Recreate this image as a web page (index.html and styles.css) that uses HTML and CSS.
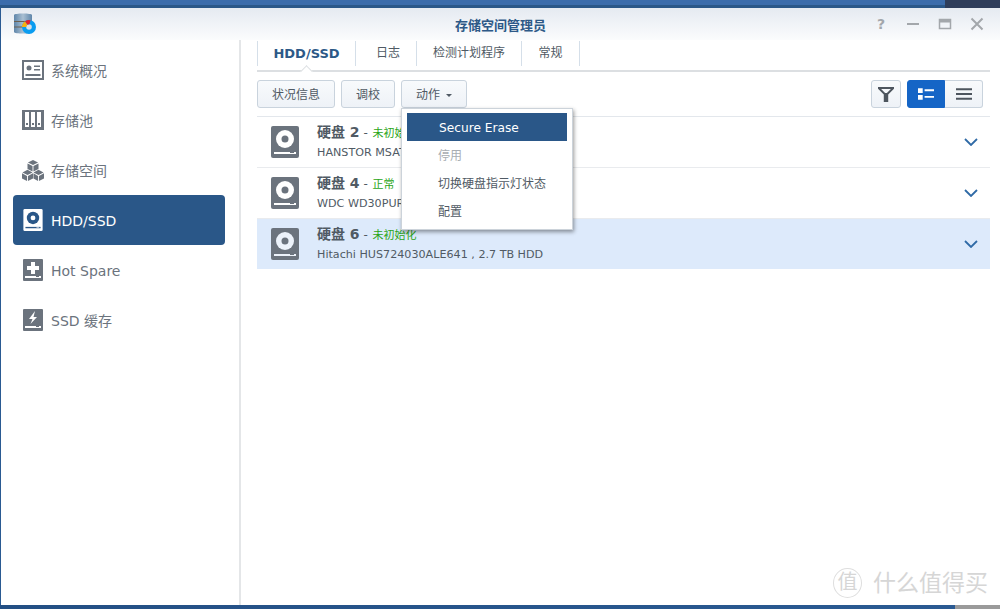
FILE: index.html
```html
<!DOCTYPE html>
<html lang="zh-CN">
<head>
    <meta charset="UTF-8">
    <title>存储空间管理员</title>
    <link rel="stylesheet" href="styles.css">
</head>
<body>
    <svg class="sprites" width="0" height="0">
        <defs>
            <linearGradient id="logo-can" x1="0" x2="1" y1="0" y2="0">
                <stop offset="0" stop-color="#5f86aa"/>
                <stop offset="0.5" stop-color="#a9bfd2"/>
                <stop offset="1" stop-color="#5f86aa"/>
            </linearGradient>
        </defs>
        <symbol id="ico-disk" viewBox="0 0 28 32">
            <rect width="28" height="32" rx="2" fill="currentColor"/>
            <circle cx="14" cy="13" r="9" fill="var(--hole)"/>
            <circle cx="14" cy="13" r="3.5" fill="currentColor"/>
            <path d="M3 26h22v2H3z" fill="var(--hole)"/>
            <path d="M19 26h4v1h-4z" fill="currentColor"/>
        </symbol>
        <symbol id="ico-spare" viewBox="0 0 20 22">
            <rect width="20" height="22" rx="1" fill="currentColor"/>
            <path d="M8 3h4v4h4v4h-4v4H8v-4H4V7h4z" fill="var(--hole)"/>
            <path d="M2 17h16v2H2z" fill="var(--hole)"/>
            <path d="M13 17h3v1h-3z" fill="currentColor"/>
        </symbol>
        <symbol id="ico-ssd" viewBox="0 0 20 22">
            <rect width="20" height="22" rx="1" fill="currentColor"/>
            <path d="M12 2L6 10h3.500L7.500 15 14 8h-3.500z" fill="var(--hole)"/>
            <path d="M2 17h16v2H2z" fill="var(--hole)"/>
            <path d="M13 17h3v1h-3z" fill="currentColor"/>
        </symbol>
    </svg>

    <div class="strip strip-top"></div>
    <div class="window">
        <header class="titlebar">
            <svg class="app-logo" viewBox="0 0 22 22">
                <path d="M0 2C0 0 18 0 18 2V19C18 21 0 21 0 19z" fill="url(#logo-can)"/>
                <path d="M0 8.500h16M0 14h16" stroke="#6b5f50" stroke-width="1"/>
                <circle cx="15" cy="14" r="7" fill="#0a9cf0"/>
                <circle cx="15" cy="14" r="2.800" fill="#d8dfe6"/>
                <path d="M8 14a7 7 0 0 1 3-5.800l2.500 3.600A3 3 0 0 0 12.200 14z" fill="#f8b010"/>
                <path d="M11 8.200a7 7 0 0 1 5.500-1l-1 4a3 3 0 0 0-2 .6z" fill="#e8202c"/>
            </svg>
            <div class="app-title">存储空间管理员</div>
            <div class="win-controls">
                <span class="win-help">?</span>
                <svg viewBox="0 0 14 14"><path d="M1 7h12" stroke="#a3a7ab" stroke-width="2"/></svg>
                <svg viewBox="0 0 14 14"><path d="M1.500 2.500h11v9h-11z" fill="none" stroke="#a3a7ab" stroke-width="1.500"/><path d="M1 3h12v2.500H1z" fill="#a3a7ab"/></svg>
                <svg viewBox="0 0 14 14"><path d="M1.500 1.500l11 11M12.500 1.500l-11 11" stroke="#a3a7ab" stroke-width="2"/></svg>
            </div>
        </header>

        <div class="content">
            <nav class="sidebar">
                <a class="side-item">
                    <svg class="side-ico" viewBox="0 0 22 20">
                        <path d="M0 0h22v20H0z" fill="currentColor"/>
                        <path d="M2 2h18v16H2z" fill="#fff"/>
                        <circle cx="7" cy="8" r="2.500" fill="currentColor"/>
                        <path d="M12 5.500h6v1.500h-6zM12 9h6v1.500h-6zM3.500 14h15v2h-15z" fill="currentColor"/>
                    </svg>
                    <span>系统概况</span>
                </a>
                <a class="side-item">
                    <svg class="side-ico" viewBox="0 0 22 20">
                        <path d="M0 0h22v20H0z" fill="currentColor"/>
                        <path d="M3 2h4v15H3zM9 2h4v15H9zM15 2h4v15h-4z" fill="#fff"/>
                        <path d="M4 13h2v2H4zM10 13h2v2h-2zM16 13h2v2h-2z" fill="currentColor"/>
                    </svg>
                    <span>存储池</span>
                </a>
                <a class="side-item">
                    <svg class="side-ico side-ico-cubes" viewBox="0 0 24 23">
                        <g fill="currentColor">
                            <path d="M12 0l5.500 2.800L12 5.600 6.500 2.800zM6 3.800l5.500 2.800v6L6 9.800zM18 3.800l-5.500 2.800v6L18 9.800z"/>
                            <path d="M6 10.800l5.500 2.800L6 16.400.5 13.600zM0 14.600l5.500 2.800v5.600L0 20.200zM12 14.600l-5.500 2.800v5.600l5.500-2.800z"/>
                            <path d="M18 10.800l5.500 2.800L18 16.400l-5.500-2.800zM12.500 14.600l5 2.800v5.600l-5-2.800zM24 14.600l-5.500 2.800v5.600l5.500-2.800z"/>
                        </g>
                    </svg>
                    <span>存储空间</span>
                </a>
                <a class="side-item is-active">
                    <svg class="side-ico side-ico-drive"><use href="#ico-disk"/></svg>
                    <span class="side-latin">HDD/SSD</span>
                </a>
                <a class="side-item">
                    <svg class="side-ico side-ico-drive"><use href="#ico-spare"/></svg>
                    <span class="side-latin">Hot Spare</span>
                </a>
                <a class="side-item">
                    <svg class="side-ico side-ico-drive"><use href="#ico-ssd"/></svg>
                    <span>SSD 缓存</span>
                </a>
            </nav>

            <main class="main">
                <div class="tabs">
                    <div class="tab is-current">HDD/SSD</div>
                    <div class="tab tab-log">日志</div>
                    <div class="tab tab-plan">检测计划程序</div>
                    <div class="tab tab-general">常规</div>
                </div>

                <div class="toolbar">
                    <button class="btn btn-info">状况信息</button>
                    <button class="btn btn-tune">调校</button>
                    <div class="action-wrap">
                        <button class="btn btn-action">动作<i class="caret"></i></button>
                        <ul class="menu">
                            <li class="menu-item is-hover">Secure Erase</li>
                            <li class="menu-item is-disabled">停用</li>
                            <li class="menu-item">切换硬盘指示灯状态</li>
                            <li class="menu-item">配置</li>
                        </ul>
                    </div>
                    <div class="tool-right">
                        <button class="btn btn-filter">
                            <svg viewBox="0 0 18 18"><path d="M0 1h18v2l-6.500 6.500V18h-5V9.500L0 3zM3.500 3.500L8 8h2l4.500-4.500z" fill="#4d555e" fill-rule="evenodd"/></svg>
                        </button>
                        <div class="view-switch">
                            <button class="view-btn is-on">
                                <svg viewBox="0 0 17 12"><path d="M0 0h5v5H0zM0 7h5v5H0zM7 1h10v2H7zM7 8h10v2H7z" fill="#fff"/></svg>
                            </button>
                            <button class="view-btn">
                                <svg viewBox="0 0 15 11"><path d="M0 0h15v2H0zM0 4.500h15v2H0zM0 9h15v2H0z" fill="#4d555e"/></svg>
                            </button>
                        </div>
                    </div>
                </div>

                <div class="disk-list">
                    <div class="disk-row">
                        <svg class="disk-ico"><use href="#ico-disk"/></svg>
                        <div class="disk-info">
                            <div class="disk-head"><b>硬盘 2</b> - <span class="state">未初始化</span></div>
                            <div class="disk-sub">HANSTOR MSAT</div>
                        </div>
                        <svg class="chevron" viewBox="0 0 14 8"><path d="M1 1l6 6 6-6" fill="none" stroke="#2f6aa6" stroke-width="1.800"/></svg>
                    </div>
                    <div class="disk-row">
                        <svg class="disk-ico"><use href="#ico-disk"/></svg>
                        <div class="disk-info">
                            <div class="disk-head"><b>硬盘 4</b> - <span class="state">正常</span></div>
                            <div class="disk-sub">WDC WD30PUR</div>
                        </div>
                        <svg class="chevron" viewBox="0 0 14 8"><path d="M1 1l6 6 6-6" fill="none" stroke="#2f6aa6" stroke-width="1.800"/></svg>
                    </div>
                    <div class="disk-row is-selected">
                        <svg class="disk-ico"><use href="#ico-disk"/></svg>
                        <div class="disk-info">
                            <div class="disk-head"><b>硬盘 6</b> - <span class="state">未初始化</span></div>
                            <div class="disk-sub">Hitachi HUS724030ALE641 , 2.7 TB HDD</div>
                        </div>
                        <svg class="chevron" viewBox="0 0 14 8"><path d="M1 1l6 6 6-6" fill="none" stroke="#2f6aa6" stroke-width="1.800"/></svg>
                    </div>
                </div>
            </main>
        </div>
    </div>
    <div class="strip strip-bottom"></div>

    <div class="watermark">
        <span class="wm-badge">值</span>
        <span class="wm-text">什么值得买</span>
    </div>
</body>
</html>
```

FILE: styles.css
```css
* {
    margin: 0;
    padding: 0;
    box-sizing: border-box;
}

body {
    width: 1000px;
    height: 609px;
    overflow: hidden;
    position: relative;
    display: flex;
    flex-direction: column;
    background-color: #2a5a92;
    font-family: "DejaVu Sans", "Noto Sans CJK SC", sans-serif;
    color: #505a64;
}

.sprites {
    position: absolute;
}

.strip {
    flex: none;
}

.strip-top {
    height: 8px;
    background:
        linear-gradient(90deg, transparent 945px, #2e3d5a 945px),
        linear-gradient(#3b6cab 0, #3b6cab 5px, #2a5788 5px);
}

.strip-bottom {
    height: 4px;
    background: linear-gradient(90deg, #234f84 0, #2a5a92 955px, #9a9a9a 955px);
}

.window {
    flex: 1;
    min-height: 0;
    margin-left: 1px;
    display: flex;
    flex-direction: column;
    background-color: #fff;
}

/* barre de titre */
.titlebar {
    flex: none;
    height: 32px;
    display: grid;
    grid-template-columns: 1fr auto 1fr;
    align-items: center;
    padding: 0 13px;
    background: linear-gradient(#e5eaf1, #fbfcfd);
}

.app-logo {
    width: 22px;
    height: 22px;
}

.app-title {
    font-size: 13px;
    font-weight: bold;
    color: #2d5987;
}

.win-controls {
    display: flex;
    justify-content: flex-end;
    align-items: center;
    gap: 18px;
    margin-right: 3px;
}

.win-controls svg {
    width: 14px;
    height: 14px;
}

.win-help {
    width: 14px;
    text-align: center;
    font-size: 14px;
    font-weight: bold;
    line-height: 14px;
    color: #a3a7ab;
}

.content {
    flex: 1;
    min-height: 0;
    display: flex;
}

/* colonne de gauche */
.sidebar {
    flex: none;
    width: 240px;
    padding: 5px 14px 0 12px;
    border-right: 2px solid #e4e6e8;
}

.side-item {
    height: 50px;
    display: flex;
    align-items: center;
    gap: 7px;
    padding-left: 9px;
    border-radius: 4px;
    font-size: 14px;
    color: #6b737d;
    --hole: #fff;
}

.side-item.is-active {
    background-color: #2a5788;
    color: #fff;
    --hole: #2a5788;
}

.side-latin {
    padding-top: 2px;
}

.side-ico {
    flex: none;
    width: 22px;
    height: 20px;
}

.side-ico-cubes {
    height: 23px;
}

.side-ico-drive {
    height: 22px;
}

/* zone principale */
.main {
    flex: 1;
    min-width: 0;
    padding: 1px 10px 0 16px;
}

.tabs {
    height: 31px;
    display: flex;
    border-bottom: 2px solid #dcdfe2;
}

.tab {
    height: 25px;
    line-height: 25px;
    text-align: center;
    font-size: 12px;
    border-right: 1px solid #d5dfe9;
    color: #505a64;
}

.tab.is-current {
    width: 99px;
    border-left: 1px solid #d5dfe9;
    font-size: 13px;
    font-weight: bold;
    color: #2d5987;
    position: relative;
}

/* petite encoche sous l'onglet actif */
.tab.is-current::after {
    content: "";
    position: absolute;
    left: 44px;
    top: 26px;
    width: 8px;
    height: 8px;
    background-color: #fff;
    border-left: 1px solid #dcdfe2;
    border-top: 1px solid #dcdfe2;
    transform: rotate(45deg);
}

.tab-log {
    width: 61px;
    padding-left: 4px;
}

.tab-plan {
    width: 105px;
}

.tab-general {
    width: 58px;
}

.toolbar {
    height: 45px;
    padding-top: 8px;
    display: flex;
    gap: 6px;
    border-bottom: 1px solid #e3e7ec;
}

.btn {
    height: 28px;
    padding-bottom: 2px;
    border: 1px solid #c9d3dd;
    border-radius: 3px;
    background: linear-gradient(#f8fafc, #eef2f7);
    font-family: inherit;
    font-size: 12px;
    color: #505a64;
}

.btn-info {
    width: 78px;
}

.btn-tune {
    width: 54px;
}

.action-wrap {
    position: relative;
}

.btn-action {
    width: 66px;
}

.caret {
    display: inline-block;
    margin-left: 6px;
    vertical-align: middle;
    border: 3px solid transparent;
    border-top: 3px solid #505a64;
    border-bottom: 0;
}

.menu {
    position: absolute;
    left: 0;
    top: 28px;
    z-index: 5;
    width: 172px;
    height: 122px;
    padding: 4px 5px;
    list-style: none;
    background-color: #fff;
    border: 1px solid #ccd3da;
    box-shadow: 1px 2px 4px rgba(0, 0, 0, 0.4);
}

.menu-item {
    height: 28px;
    line-height: 28px;
    padding-left: 31px;
    font-size: 12px;
    color: #505a64;
}

.menu-item.is-hover {
    margin-bottom: 1px;
    padding-left: 32px;
    line-height: 30px;
    font-size: 12.2px;
    background-color: #2a5788;
    color: #fff;
}

.menu-item.is-disabled {
    color: #a9aeb3;
}

.tool-right {
    margin-left: auto;
    margin-right: 7px;
    display: flex;
    gap: 6px;
}

.btn-filter {
    width: 30px;
    padding: 0;
    display: flex;
    align-items: center;
    justify-content: center;
}

.btn-filter svg {
    width: 16px;
    height: 16px;
}

.view-switch {
    display: flex;
    height: 28px;
}

.view-btn {
    width: 38px;
    display: flex;
    align-items: center;
    justify-content: center;
    border: 1px solid #c9d3dd;
    border-left: 0;
    border-radius: 0 3px 3px 0;
    background: linear-gradient(#f8fafc, #eef2f7);
}

.view-btn.is-on {
    border: 1px solid #1565c6;
    border-radius: 3px 0 0 3px;
    background: #1565c6;
}

.view-btn svg {
    width: 16px;
    height: 12px;
}

/* liste des disques */
.disk-row {
    height: 51px;
    display: flex;
    align-items: center;
    padding: 0 12px 0 14px;
    border-bottom: 1px solid #e9ebee;
    --hole: #fff;
}

.disk-row.is-selected {
    height: 50px;
    border-bottom: 0;
    background-color: #ddeafb;
    --hole: #ecf2fa;
}

.disk-ico {
    flex: none;
    width: 28px;
    height: 32px;
    color: #6b737d;
}

.disk-info {
    flex: 1;
    margin-left: 18px;
}

.disk-head {
    height: 19px;
    line-height: 17px;
    font-size: 12px;
    white-space: nowrap;
}

.disk-head b {
    font-size: 14px;
}

.state {
    margin-left: 1px;
    font-size: 11px;
    color: #2aa515;
}

.disk-sub {
    margin-top: 2px;
    font-size: 11.15px;
    line-height: 16px;
    color: #505a64;
}

.chevron {
    flex: none;
    width: 14px;
    height: 8px;
}

/* filigrane */
.watermark {
    position: absolute;
    left: 833px;
    top: 568px;
    display: flex;
    align-items: center;
    gap: 11px;
    color: #d6d6d6;
}

.wm-badge {
    width: 29px;
    height: 30px;
    border: 1px solid #dedede;
    border-radius: 50%;
    font-size: 20px;
    line-height: 27px;
    text-align: center;
}

.wm-text {
    font-size: 23px;
    line-height: 30px;
    white-space: nowrap;
}
```
